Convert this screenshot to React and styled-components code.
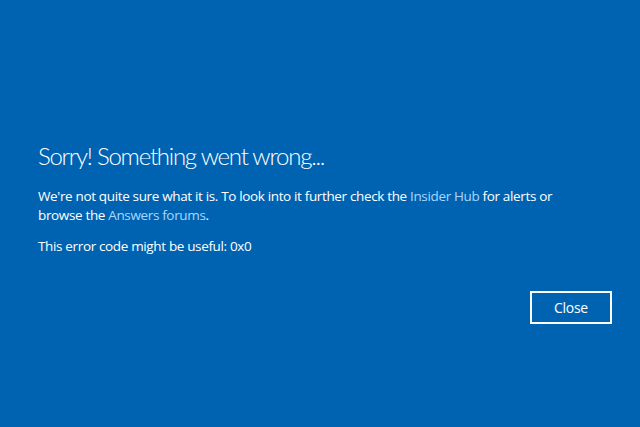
import React from 'react';
import styled, { createGlobalStyle } from 'styled-components';

const GlobalStyle = createGlobalStyle`
    html, body {
        margin: 0;
        padding: 0;
        background: #0063b1;
    }
`;

const Screen = styled.main`
    width: 640px;
    height: 427px;
    box-sizing: border-box;
    background-color: #0063b1;
    color: #ffffff;
    font-family: 'Open Sans', 'Noto Sans', sans-serif;
    padding: 138px 28px 0 38px;
    display: flex;
    flex-direction: column;
`;

const Title = styled.h1`
    margin: 0;
    font-family: 'Lato', 'Open Sans', sans-serif;
    font-size: 24px;
    font-weight: 300;
    letter-spacing: -1.25px;
    line-height: 36px;
`;

const Message = styled.p`
    margin: ${(props) => props.$top}px 0 0;
    font-size: 13.5px;
    font-weight: 400;
    letter-spacing: -0.35px;
    line-height: 19px;
    width: 530px;
`;

const Link = styled.span`
    color: #a8d8ff;
`;

const Actions = styled.div`
    display: flex;
    justify-content: flex-end;
    margin-top: 35px;
`;

const Button = styled.button`
    width: 82px;
    height: 33px;
    box-sizing: border-box;
    border: 2px solid #ffffff;
    background: transparent;
    color: #ffffff;
    font-family: inherit;
    font-size: 14px;
    letter-spacing: -0.3px;
    padding: 0;
`;

export default function App() {
    return (
        <>
            <GlobalStyle />
            <Screen>
                <Title>Sorry! Something went wrong...</Title>
                <Message $top={13}>
                    We're not quite sure what it is. To look into it further check the{' '}
                    <Link>Insider Hub</Link> for alerts or browse the <Link>Answers forums</Link>.
                </Message>
                <Message $top={12}>This error code might be useful: 0x0</Message>
                <Actions>
                    <Button>Close</Button>
                </Actions>
            </Screen>
        </>
    );
}
